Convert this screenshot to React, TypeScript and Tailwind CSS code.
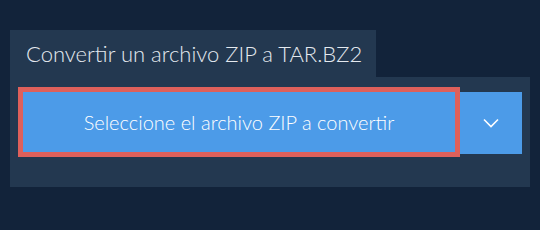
export default function App() {
  return (
    <div className="w-[540px] h-[230px] bg-[#12233a] pt-[30px] px-[10px] font-['Lato','Noto_Sans',sans-serif]">
      <div className="w-[366px] h-[47px] bg-[#233850] flex items-center pl-4 text-[22px] font-light text-[#e4e9ef]">
        Convertir un archivo ZIP a TAR.BZ2
      </div>
      <div className="w-[520px] h-[110px] bg-[#233850] pl-[13px] pt-[15px] flex items-start">
        <button className="w-[432px] h-[60px] bg-[#4c9be8] outline-[5px] outline-solid outline-[#de605b] text-white text-[20px] font-light flex items-center justify-center">
          Seleccione el archivo ZIP a convertir
        </button>
        <button className="ml-[5px] w-[62px] h-[62px] bg-[#4c9be8] flex items-center justify-center">
          <svg width="16" height="10" viewBox="0 0 16 10" fill="none">
            <path d="M1 1.5 L8 8.5 L15 1.5" stroke="white" strokeWidth="1.6" />
          </svg>
        </button>
      </div>
    </div>
  );
}
